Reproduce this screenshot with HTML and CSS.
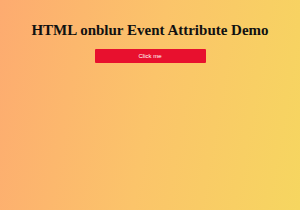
FILE: index.html
```html
<!DOCTYPE html>
<html>
<head>
<meta charset="utf-8">
<link rel="stylesheet" href="styles.css">
</head>
<body>
<div class="page">
  <h1 class="title">HTML onblur Event Attribute Demo</h1>
  <button class="btn">Click me</button>
</div>
</body>
</html>
```
FILE: styles.css
```css
html, body {
  margin: 0;
  padding: 0;
  height: 100%;
}
body {
  background: linear-gradient(100deg, #fdab70 0%, #fbc46a 50%, #f6d660 100%);
}
.page {
  display: flex;
  flex-direction: column;
  align-items: center;
  padding-top: 21px;
}
.title {
  margin: 0;
  font-family: "Liberation Serif", "Times New Roman", serif;
  font-weight: bold;
  font-size: 15px;
  line-height: 18px;
  color: #111;
}
.btn {
  margin-top: 10px;
  width: 111px;
  height: 14px;
  padding: 0;
  border: none;
  background: #e8102e;
  color: #fff;
  font-family: "Liberation Sans", Arial, sans-serif;
  font-size: 6px;
  border-radius: 1px;
}
```
